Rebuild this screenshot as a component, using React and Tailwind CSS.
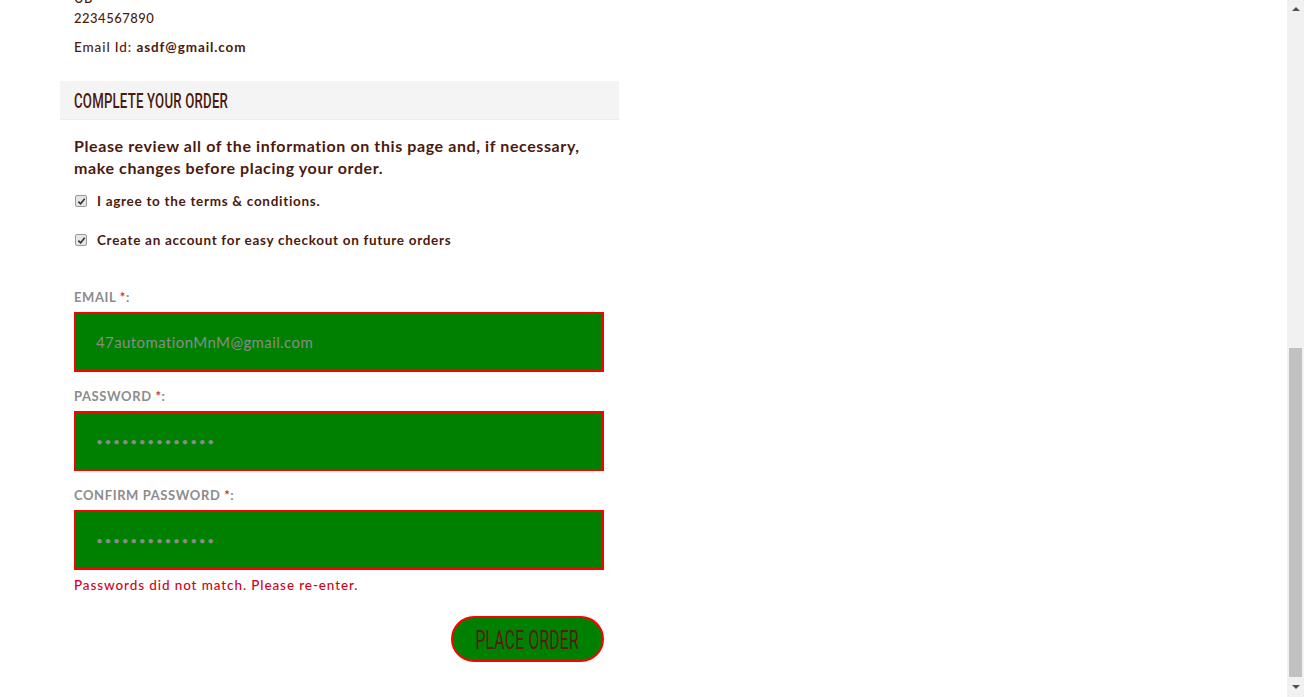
import React from "react";

const body = { fontFamily: "Lato, 'Noto Sans', sans-serif" };
const cond = { fontFamily: "Roboto, 'Liberation Sans', sans-serif" };

const Check = () => (
  <span className="w-[12px] h-[12px] rounded-[2px] border border-[#9a9a9a] bg-[#e6e6e6] flex items-center justify-center">
    <svg width="9" height="9" viewBox="0 0 10 10">
      <path d="M1.5 5.2 L4 7.6 L8.6 2" fill="none" stroke="#333" strokeWidth="1.8" />
    </svg>
  </span>
);

const Field = ({ label, value, dots, first }) => (
  <div className={first ? "mt-[38px]" : "mt-[15px]"}>
    <p className="text-[13px] leading-[18px] font-bold text-[#8c8c8c] tracking-[0.6px]">
      {label} <span className="text-[#c0392b]">*</span>:
    </p>
    <div className="mt-[6px] h-[60px] w-[530px] border-2 border-[#ff0000] bg-[#008000] flex items-center pl-[20px]">
      {dots ? (
        <span className="text-[#8a8a8a] text-[12px] tracking-[1.6px] leading-none pt-[2px]">
          {"••••••••••••••"}
        </span>
      ) : (
        <span className="text-[#8a8a8a] text-[15px] tracking-[0.4px]">{value}</span>
      )}
    </div>
  </div>
);

export default function App() {
  return (
    <div className="flex h-[697px] overflow-hidden bg-white" style={body}>
      <div className="flex-1 overflow-hidden">
        <div className="ml-[60px] w-[559px] text-[#4b1a0e]">
          <div className="px-[14px] mt-[-12px] text-[13px] leading-[20px] font-medium tracking-[0.5px]">
            <p>UB</p>
            <p>2234567890</p>
            <p className="mt-[9px] text-[13.5px] tracking-[0.9px]">
              Email Id: <span className="font-bold">asdf@gmail.com</span>
            </p>
          </div>

          <div className="mt-[24px] h-[39px] bg-[#f4f4f4] border-b border-[#ececec] flex items-center px-[14px] pt-[3px]">
            <h2 className="inline-block text-[21px] font-medium uppercase whitespace-nowrap tracking-[0.3px] scale-x-[0.63] origin-left" style={cond}>
              Complete Your Order
            </h2>
          </div>

          <div className="px-[14px]">
            <p className="mt-[15px] text-[16px] leading-[22px] font-bold tracking-[0.6px]">
              Please review all of the information on this page and, if necessary,
              <br />
              make changes before placing your order.
            </p>

            <div className="mt-[12px] h-[20px] flex items-center gap-[10px] pl-[1px]">
              <Check />
              <span className="text-[13.5px] font-bold tracking-[0.7px]">I agree to the terms &amp; conditions.</span>
            </div>
            <div className="mt-[19px] h-[20px] flex items-center gap-[10px] pl-[1px]">
              <Check />
              <span className="text-[13.5px] font-bold tracking-[0.7px]">Create an account for easy checkout on future orders</span>
            </div>

            <Field first label="EMAIL" value="47automationMnM@gmail.com" />
            <Field label="PASSWORD" dots />
            <Field label="CONFIRM PASSWORD" dots />

            <p className="mt-[6px] text-[13.5px] leading-[18px] text-[#d0021b] font-medium tracking-[0.9px]">
              Passwords did not match. Please re-enter.
            </p>

            <div className="w-[530px] flex justify-end mt-[22px]">
              <button className="w-[153px] h-[46px] rounded-full border-2 border-[#ff0000] bg-[#008000] flex items-center justify-center overflow-hidden pt-[3px]">
                <span className="inline-block text-[#5a1a0e] text-[25px] uppercase whitespace-nowrap tracking-[0.3px] scale-x-[0.63]" style={cond}>
                  Place Order
                </span>
              </button>
            </div>
          </div>
        </div>
      </div>

      <div className="w-[17px] h-full bg-[#f1f1f1] flex flex-col items-center">
        <div className="h-[17px] flex items-center justify-center">
          <svg width="8" height="5" viewBox="0 0 8 5"><path d="M0 5 L4 1 L8 5Z" fill="#505050" /></svg>
        </div>
        <div className="flex-1 w-full flex flex-col justify-end px-[2px]">
          <div className="h-[329px] w-full bg-[#c1c1c1]" />
        </div>
        <div className="h-[20px] flex items-center justify-center">
          <svg width="8" height="5" viewBox="0 0 8 5"><path d="M0 0 L4 4 L8 0Z" fill="#505050" /></svg>
        </div>
      </div>
    </div>
  );
}
